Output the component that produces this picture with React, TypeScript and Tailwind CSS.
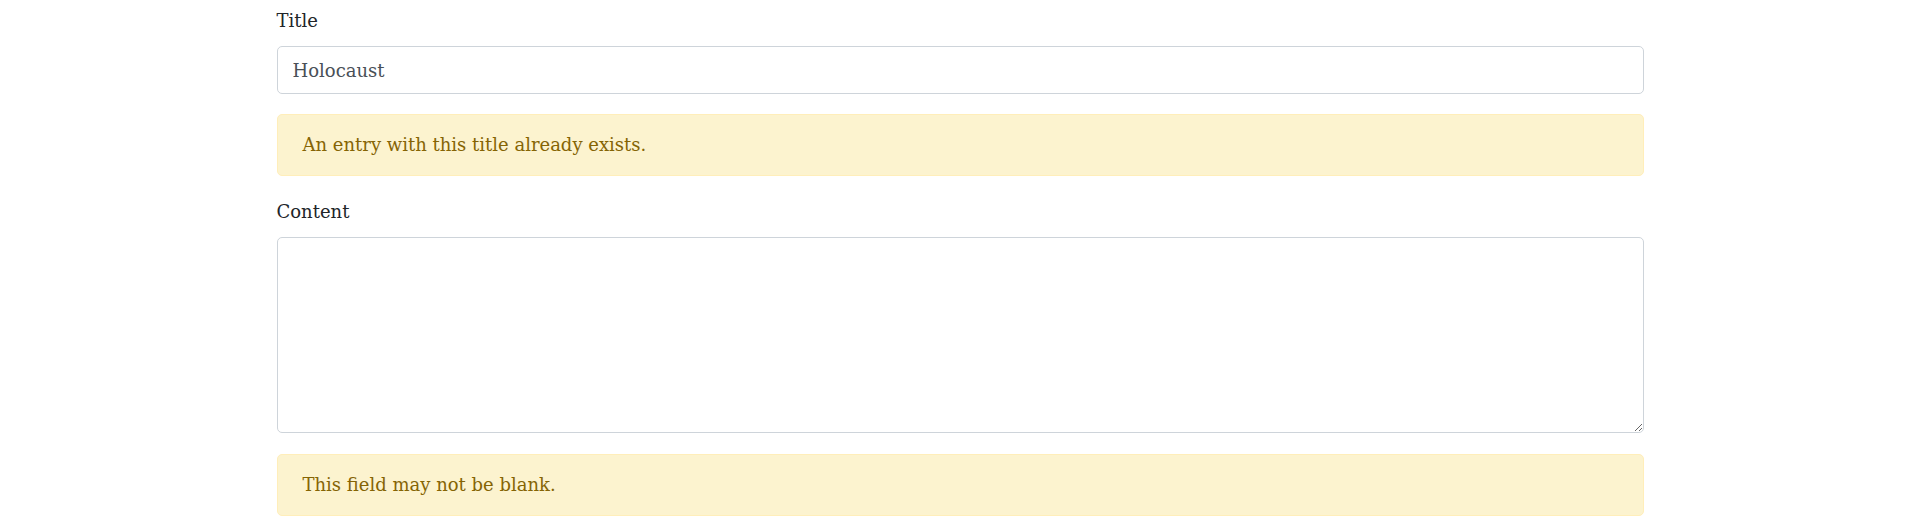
export default function App() {
  return (
    <div className="min-h-[523px] bg-white pt-[6px] font-['DejaVu_Serif',serif] text-[18px] leading-[30px] text-[#212529]">
      <form className="mx-auto w-[1367px]">
        <div className="mb-[20px]">
          <label className="mb-[10px] block">Title</label>
          <input
            className="block h-[48px] w-full rounded-[5px] border border-[#ced4da] bg-white px-[15px] text-[#495057] outline-none"
            defaultValue="Holocaust"
          />
        </div>
        <div className="mb-[21px] rounded-[5px] border border-[#ffeeba] bg-[#fcf3cf] px-[25px] py-[15px] text-[#856404]">
          An entry with this title already exists.
        </div>
        <div className="mb-[21px]">
          <label className="mb-[10px] block">Content</label>
          <textarea className="block h-[196px] w-full rounded-[5px] border border-[#ced4da] bg-white px-[15px] py-[7px] text-[#495057] outline-none" />
        </div>
        <div className="rounded-[5px] border border-[#ffeeba] bg-[#fcf3cf] px-[25px] py-[15px] text-[#856404]">
          This field may not be blank.
        </div>
      </form>
    </div>
  );
}
